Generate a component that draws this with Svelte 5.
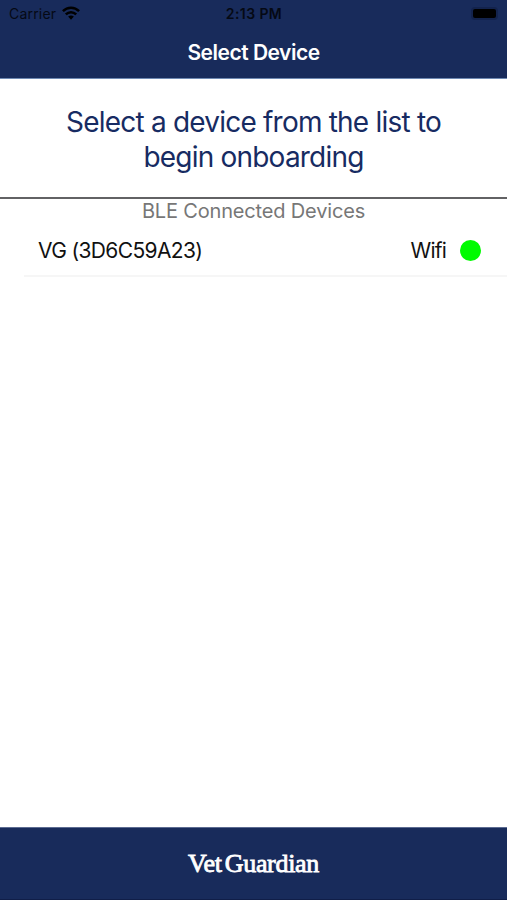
<script>
  const devices = [{ name: 'VG (3D6C59A23)', link: 'Wifi' }];
</script>

<div class="screen">
  <header>
    <div class="status">
      <div class="carrier">
        <span>Carrier</span>
        <svg width="18" height="14" viewBox="0 0 18 14" aria-hidden="true">
          <g fill="none" stroke="#000" stroke-width="2.5">
            <path d="M0.9 5.2C5.5 0.6 12.5 0.6 17.1 5.2" />
            <path d="M3.8 8.3C6.8 5.4 11.2 5.4 14.2 8.3" />
          </g>
          <path d="M6.1 10.6Q9 8.2 11.9 10.6L9 13.7Z" />
        </svg>
      </div>
      <time>2:13 PM</time>
      <div class="power"><span class="battery"></span></div>
    </div>
    <h1>Select Device</h1>
  </header>
  <section class="intro">
    <p class="first">Select a device from the list to</p>
    <p class="second">begin onboarding</p>
  </section>
  <main>
    <h2>BLE Connected Devices</h2>
    {#each devices as device}
      <div class="row">
        <span class="name">{device.name}</span>
        <span class="link">{device.link}</span>
        <span class="dot"></span>
      </div>
    {/each}
  </main>
  <footer><span class="brand">Vet<b>Guardian</b></span></footer>
</div>

<style>
  :global(body) { margin: 0; background: #fff; }
  .screen {
    width: 507px; height: 900px; display: flex; flex-direction: column;
    overflow: hidden; background: #fff; color: #111;
    font-family: Inter, "Liberation Sans", sans-serif;
  }
  header { height: 79px; box-sizing: border-box; background: #182b5b; border-bottom: 1px solid #6e89b2; }
  .status {
    height: 27px; padding: 0 8px 0 9px; display: grid;
    grid-template-columns: 1fr auto 1fr; align-items: center; color: #050914;
    font-size: 14px; line-height: 28px;
  }
  .carrier { display: flex; align-items: center; gap: 6px; letter-spacing: 0.2px; }
  .carrier svg { display: block; margin-top: -2px; }
  time { font-weight: 600; font-size: 14px; letter-spacing: 0.4px; }
  .power { display: flex; justify-content: flex-end; }
  .battery { width: 23px; height: 9px; border-radius: 2px; background: #000; box-shadow: 0 0 0 2px #13234d; margin: -1px 3px 0 0; }
  h1 { margin: 0; text-align: center; color: #fff; font-size: 21px; font-weight: 600; line-height: 51px; letter-spacing: -0.5px; }
  .intro {
    height: 120px; box-sizing: border-box; padding-top: 26px;
    border-bottom: 2px solid #626264; color: #172b62; text-align: center;
    font-size: 28px; line-height: 35px; letter-spacing: -0.79px;
  }
  p { margin: 0; white-space: nowrap; }
  main { flex: 1; }
  h2 { margin: 0 0 1px; text-align: center; color: #777; font-size: 20px; font-weight: 400; line-height: 25px; letter-spacing: -0.17px; }
  .row {
    height: 52px; box-sizing: border-box; margin-left: 24px; padding: 0 26px 0 14px;
    display: flex; align-items: center; border-bottom: 2px solid #f6f6f6; font-size: 21px;
  }
  .name { letter-spacing: -0.63px; }
  .link { margin-left: auto; letter-spacing: -0.8px; }
  .dot { width: 21px; height: 21px; margin-left: 14px; border-radius: 50%; background: #00fb00; }
  footer {
    height: 73px; box-sizing: border-box; background: #182b5b; color: #fff; display: flex;
    justify-content: center; align-items: center; border-top: 1px solid #5c6b91;
    border-bottom: 1px solid #101e48;
  }
  .brand { font-family: "Liberation Serif", serif; font-size: 26px; font-weight: 400; letter-spacing: -0.3px; -webkit-text-stroke: 0.8px #fff; }
  b { margin-left: 3px; font-weight: 400; }
</style>
